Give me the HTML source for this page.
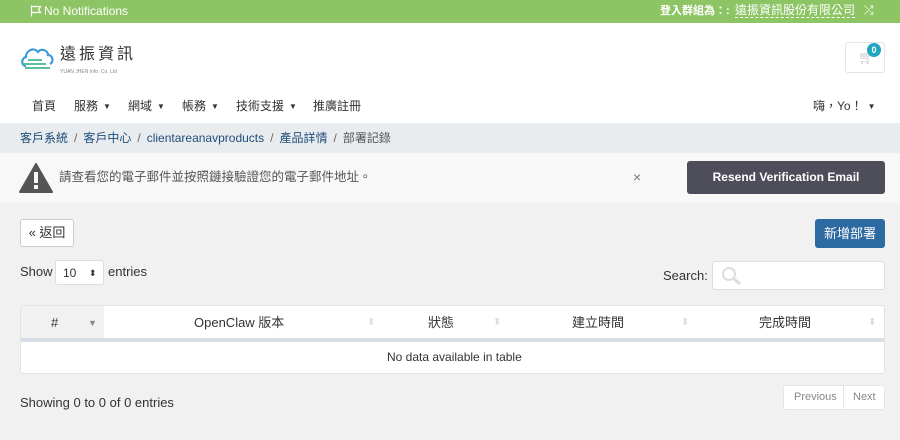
<!DOCTYPE html>
<html><head><meta charset="utf-8"><style>
*{box-sizing:border-box;margin:0;padding:0}
body{width:900px;height:440px;overflow:hidden;background:#f1f1f1;font-family:"Liberation Sans","Noto Sans CJK TC",sans-serif;font-size:13px;color:#333;position:relative;line-height:15px}
.abs{position:absolute}
.top{left:0;top:0;width:900px;height:23px;background:#8dc565;color:#fff;font-size:12px}
.hdr{left:0;top:23px;width:900px;height:100px;background:#fff}
.bc{left:0;top:123px;width:900px;height:30px;background:#e9ecef;color:#1f4e79;font-size:12px;line-height:30px;padding-left:20px}
.bc span{color:#666;margin:0 6px}
.alert{left:0;top:153px;width:900px;height:50px;background:#f8f8f8}
.btn{border:1px solid #ccc;background:#fff;border-radius:3px;text-align:center}
.nav{font-size:12px;top:76px}
.car{font-size:8px;margin-left:5px;vertical-align:1px}
</style></head><body>
<div class="abs top">
 <svg class="abs" style="left:30px;top:5px" width="12" height="12" viewBox="0 0 12 12"><path d="M1.5 0.5V11.5M1.5 1.5H10.5L8.5 4.5L10.5 7.5H1.5" fill="none" stroke="#fff" stroke-width="1.2"/></svg>
 <div class="abs" style="left:44px;top:4px">No Notifications</div>
 <div class="abs" style="left:660px;top:4px;font-size:11px;font-weight:bold">登入群組為：:</div>
 <div class="abs" style="left:735px;top:3px;font-size:12px;border-bottom:1px dashed #fff;line-height:14px">遠振資訊股份有限公司</div>
 <div class="abs" style="left:864px;top:3px;font-size:12px">⤮</div>
</div>
<div class="abs hdr">
 <svg class="abs" style="left:20px;top:19px" width="36" height="30" viewBox="0 0 36 30"><path d="M6 24C1 24 1 16 6 15C6 8 14 5 18 10C21 6 28 8 28 13C33 13 34 20 30 22" fill="none" stroke="#3a9ad6" stroke-width="2.2"/><path d="M3 22H26M5 26H30M8 18H22" stroke="#5bc0a0" stroke-width="2"/></svg>
 <div class="abs" style="left:60px;top:20px;font-size:16px;line-height:18px;letter-spacing:3px;color:#333;font-family:'Noto Sans CJK TC',sans-serif">遠振資訊</div>
 <div class="abs" style="left:60px;top:42px;font-size:5px;color:#888">YUAN JHEN Info. Co. Ltd</div>
 <div class="abs btn" style="left:845px;top:19px;width:40px;height:31px;border-color:#e5e5e5"></div>
 <div class="abs" style="left:858px;top:27px;color:#ccc;font-size:13px">🛒︎</div>
 <div class="abs" style="left:867px;top:20px;width:14px;height:14px;border-radius:7px;background:#1fa7c0;color:#fff;font-size:9px;text-align:center;line-height:14px;font-weight:bold">0</div>
 <div class="abs nav" style="left:32px">首頁</div>
 <div class="abs nav" style="left:74px">服務<span class="car">▼</span></div>
 <div class="abs nav" style="left:128px">網域<span class="car">▼</span></div>
 <div class="abs nav" style="left:182px">帳務<span class="car">▼</span></div>
 <div class="abs nav" style="left:236px">技術支援<span class="car">▼</span></div>
 <div class="abs nav" style="left:313px">推廣註冊</div>
 <div class="abs nav" style="left:813px">嗨，Yo！<span class="car">▼</span></div>
</div>
<div class="abs bc">客戶系統<span>/</span>客戶中心<span>/</span>clientareanavproducts<span>/</span>產品詳情<span>/</span><b style="font-weight:normal;color:#555">部署記錄</b></div>
<div class="abs alert">
 <svg class="abs" style="left:19px;top:10px" width="34" height="30" viewBox="0 0 34 30"><path d="M17 1L33 29H1Z" fill="#555" stroke="#555" stroke-linejoin="round" stroke-width="2"/><rect x="15" y="9" width="4" height="11" fill="#f8f8f8"/><rect x="15" y="22" width="4" height="4" fill="#f8f8f8"/></svg>
 <div class="abs" style="left:59px;top:17px;color:#555;font-size:12.5px">請查看您的電子郵件並按照鏈接驗證您的電子郵件地址。</div>
 <div class="abs" style="left:633px;top:17px;color:#777;font-size:14px">×</div>
 <div class="abs" style="left:687px;top:8px;width:198px;height:33px;background:#4d4e5a;border-radius:3px;color:#fff;font-size:12px;font-weight:bold;text-align:center;line-height:33px">Resend Verification Email</div>
</div>
<div class="abs btn" style="left:20px;top:219px;width:54px;height:28px;line-height:26px;font-size:13px">« 返回</div>
<div class="abs" style="left:815px;top:219px;width:70px;height:29px;background:#2e6aa2;border-radius:3px;color:#fff;line-height:29px;text-align:center;font-size:13px">新增部署</div>
<div class="abs" style="left:20px;top:264px">Show</div>
<div class="abs btn" style="left:55px;top:260px;width:49px;height:25px;font-size:12px;text-align:left;padding:5px 0 0 7px;border-color:#ddd">10<span style="position:absolute;left:33px;top:5px;font-size:9px">⬍</span></div>
<div class="abs" style="left:108px;top:264px">entries</div>
<div class="abs" style="left:663px;top:268px">Search:</div>
<div class="abs btn" style="left:712px;top:261px;width:173px;height:29px;border-color:#ddd"><svg class="abs" style="left:8px;top:4px" width="22" height="20" viewBox="0 0 22 20"><circle cx="8" cy="8" r="6" fill="none" stroke="#ddd" stroke-width="2"/><path d="M12 12L19 18" stroke="#ddd" stroke-width="3"/></svg></div>
<div class="abs" style="left:20px;top:305px;width:865px;height:69px;background:#fff;border:1px solid #e2e2e2;border-radius:3px"></div>
<div class="abs" style="left:21px;top:306px;width:83px;height:32px;background:#f1f1f1"></div>
<div class="abs" style="left:21px;top:338px;width:863px;height:4px;background:#d8dde5"></div>
<div class="abs" style="left:51px;top:315px">#</div><div class="abs" style="left:88px;top:316px;color:#888;font-size:9px">▼</div>
<div class="abs" style="left:194px;top:315px">OpenClaw 版本</div><div class="abs" style="left:367px;top:315px;color:#ddd;font-size:10px">⬍</div>
<div class="abs" style="left:428px;top:315px">狀態</div><div class="abs" style="left:493px;top:315px;color:#ddd;font-size:10px">⬍</div>
<div class="abs" style="left:572px;top:315px">建立時間</div><div class="abs" style="left:681px;top:315px;color:#ddd;font-size:10px">⬍</div>
<div class="abs" style="left:759px;top:315px">完成時間</div><div class="abs" style="left:868px;top:315px;color:#ddd;font-size:10px">⬍</div>
<div class="abs" style="left:387px;top:350px;font-size:12px">No data available in table</div>
<div class="abs" style="left:20px;top:395px">Showing 0 to 0 of 0 entries</div>
<div class="abs" style="left:783px;top:385px;width:102px;height:25px;background:#fff;border:1px solid #e5e5e5;border-radius:3px;font-size:11px;color:#888;line-height:23px"><span style="position:absolute;left:10px">Previous</span><span style="position:absolute;left:59px;top:0;width:1px;height:23px;background:#e5e5e5"></span><span style="position:absolute;left:69px">Next</span></div>
</body></html>
